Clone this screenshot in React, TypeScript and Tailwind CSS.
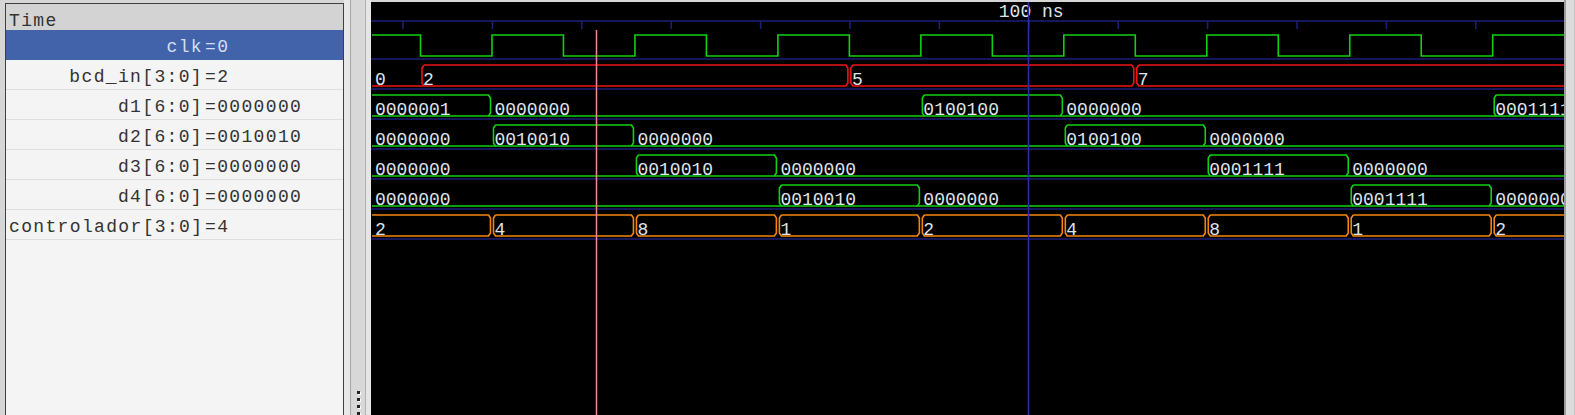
const X0 = 372;
const XEND = 1564;
const E = (k: number) => 420.5 + 71.48 * k;

const GREEN = "#12d012";
const RED = "#ee1414";
const ORANGE = "#f5850f";
const NAVY = "#1e1e7a";
const LABEL = "#dfe4ec";

type Bus = { top: number; color: string; segs: [string, number][] };

const buses: Bus[] = [
  { top: 59, color: RED, segs: [["0", -1], ["2", 0], ["5", 6], ["7", 10]] },
  { top: 89, color: GREEN, segs: [["0000001", -1], ["0000000", 1], ["0100100", 7], ["0000000", 9], ["0001111", 15]] },
  { top: 119, color: GREEN, segs: [["0000000", -1], ["0010010", 1], ["0000000", 3], ["0100100", 9], ["0000000", 11]] },
  { top: 149, color: GREEN, segs: [["0000000", -1], ["0010010", 3], ["0000000", 5], ["0001111", 11], ["0000000", 13]] },
  { top: 179, color: GREEN, segs: [["0000000", -1], ["0010010", 5], ["0000000", 7], ["0001111", 13], ["0000000", 15]] },
  { top: 209, color: ORANGE, segs: [["2", -1], ["4", 1], ["8", 3], ["1", 5], ["2", 7], ["4", 9], ["8", 11], ["1", 13], ["2", 15]] },
];

const names = [
  { name: "clk", value: "0", sel: true },
  { name: "bcd_in[3:0]", value: "2" },
  { name: "d1[6:0]", value: "0000000" },
  { name: "d2[6:0]", value: "0010010" },
  { name: "d3[6:0]", value: "0000000" },
  { name: "d4[6:0]", value: "0000000" },
  { name: "controlador[3:0]", value: "4" },
];

function segPath(v: string, a: number | null, b: number | null, yT: number, yB: number) {
  if (/^0+$/.test(v)) {
    const l = a === null ? X0 : a - 3.5;
    const r = b === null ? XEND : b + 3.5;
    return `M${l} ${yB} L${r} ${yB}`;
  }
  const l = a === null ? X0 : a + 3.5;
  const r = b === null ? XEND : b - 3.5;
  let d = `M${l} ${yT} L${r} ${yT}`;
  if (b !== null) d += ` L${b - 1.5} ${yT + 3} L${b - 1.5} ${yB - 3} L${r} ${yB}`;
  else d += ` M${r} ${yB}`;
  d += ` L${l} ${yB}`;
  if (a !== null) d += ` L${a + 1.5} ${yB - 3} L${a + 1.5} ${yT + 3} L${l} ${yT}`;
  return d;
}

function clockPoints() {
  const hi = 35;
  const lo = 56;
  let level = hi;
  const pts: string[] = [`${X0},${level}`];
  for (let k = 0; k < 16; k++) {
    const x = E(k);
    pts.push(`${x},${level}`);
    level = level === hi ? lo : hi;
    pts.push(`${x},${level}`);
  }
  pts.push(`${XEND},${level}`);
  return pts.join(" ");
}

function Waves() {
  const ticks = Array.from({ length: 14 }, (_, i) => 403 + 89.4 * i);
  const rowLines = [59, 89, 119, 149, 179, 209, 239];
  return (
    <svg width={1193} height={413} viewBox="371 2 1193 413" className="block">
      <line x1={371} y1={21} x2={XEND} y2={21} stroke={NAVY} strokeWidth={1.5} />
      {ticks.map((x) => (
        <line key={x} x1={x} y1={21} x2={x} y2={29} stroke={NAVY} strokeWidth={1.5} />
      ))}
      {rowLines.map((y) => (
        <line key={y} x1={371} y1={y} x2={XEND} y2={y} stroke={NAVY} strokeWidth={1.5} />
      ))}
      <text x={998.8} y={16.7} fill={LABEL} fontFamily="'Liberation Mono', monospace" fontSize={18}>
        100 ns
      </text>

      <polyline points={clockPoints()} fill="none" stroke={GREEN} strokeWidth={1.6} />

      {buses.map((bus) => {
        const yT = bus.top + 6;
        const yB = bus.top + 27;
        return (
          <g key={bus.top}>
            {bus.segs.map(([v, s], i) => {
              const a = s < 0 ? null : E(s);
              const next = bus.segs[i + 1];
              const b = next ? E(next[1]) : null;
              return (
                <g key={i}>
                  <path d={segPath(v, a, b, yT, yB)} fill="none" stroke={bus.color} strokeWidth={1.6} />
                  <text
                    x={a === null ? 375 : a + 2.5}
                    y={bus.top + 26}
                    fill={LABEL}
                    fontFamily="'Liberation Mono', monospace"
                    fontSize={18}
                  >
                    {v}
                  </text>
                </g>
              );
            })}
          </g>
        );
      })}

      <line x1={1028.5} y1={2} x2={1028.5} y2={415} stroke="#2e2eaa" strokeWidth={1.5} />
      <line x1={596.5} y1={30} x2={596.5} y2={415} stroke="#f08c8c" strokeWidth={1.5} />
    </svg>
  );
}

export default function App() {
  return (
    <div className="flex h-[415px] w-[1575px] overflow-hidden bg-[#d6d6d6] pl-[5px] font-['Liberation_Mono',monospace] text-[18px]">
      <div className="mt-[3px] w-[339px] shrink-0 border-x border-t border-[#404040] bg-[#f4f4f4] tracking-[1.35px]">
        <div className="h-[26px] bg-[#d3d3d3] pl-[3px] pt-[8px] leading-none text-[#333]">Time</div>
        {names.map((r) => (
          <div
            key={r.name}
            className={
              r.sel
                ? "flex h-[30px] border-b border-[#4262aa] bg-[#4262aa] text-[#d2def4]"
                : "flex h-[30px] border-b border-[#dedede] text-[#333]"
            }
          >
            <div className="w-[197px] shrink-0 whitespace-nowrap pl-[3px] pt-[8px] text-right leading-none">{r.name}</div>
            <div className="ml-[2px] whitespace-nowrap pt-[8px] leading-none">={r.value}</div>
          </div>
        ))}
      </div>

      <div className="flex w-[27px] shrink-0">
        <div className="w-[6px] bg-[#e8e8e8]" />
        <div className="w-px bg-[#a8a8a8]" />
        <div className="flex w-[14px] flex-col items-center justify-end gap-[4px] bg-[#d8d8d8]">
          <div className="h-[3px] w-[3px] bg-[#222] shadow-[1px_1px_0_#fff]" />
          <div className="h-[3px] w-[3px] bg-[#222] shadow-[1px_1px_0_#fff]" />
          <div className="h-[3px] w-[3px] bg-[#222] shadow-[1px_1px_0_#fff]" />
          <div className="h-[3px] w-[3px] bg-[#222] shadow-[1px_1px_0_#fff]" />
        </div>
        <div className="w-px bg-[#b0b0b0]" />
        <div className="w-[5px] bg-[#e6e6e6]" />
      </div>

      <div className="mt-[2px] w-[1193px] shrink-0 bg-black">
        <Waves />
      </div>

      <div className="w-[11px] shrink-0 border-l-2 border-r border-l-[#9c9c9c] border-r-[#c4c4c4] bg-[#dcdcdc]" />
    </div>
  );
}
